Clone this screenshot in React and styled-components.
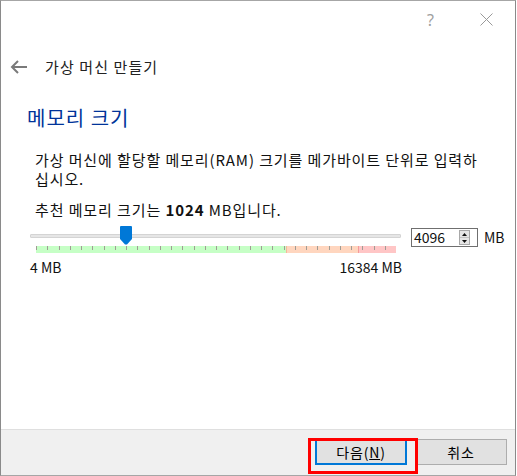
import React from "react";
import styled, { createGlobalStyle } from "styled-components";

const Global = createGlobalStyle`
  html, body { margin: 0; padding: 0; background: #ffffff; }
  body { font-family: "Noto Sans CJK KR", "Noto Sans", sans-serif; color: #000; }
`;

const Window = styled.div`
  position: relative;
  width: 516px;
  height: 476px;
  box-sizing: border-box;
  border: 1px solid #a6a6a6;
  border-left-color: #8a8a8a;
  border-right-color: #8a8a8a;
  background: #ffffff;
  display: flex;
  flex-direction: column;
`;

const TitleBar = styled.div`
  height: 37px;
  display: flex;
  align-items: center;
  justify-content: flex-end;
  padding-right: 22px;
  gap: 46px;
  color: #9a9a9a;
`;

const HelpMark = styled.span`
  font-family: "Noto Sans", sans-serif;
  font-size: 16px;
  line-height: 16px;
  color: #a0a0a0;
`;

const HeaderRow = styled.div`
  margin-top: 19px;
  height: 20px;
  display: flex;
  align-items: center;
  padding-left: 9px;
  gap: 17px;
`;

const HeaderTitle = styled.span`
  font-size: 15px;
  line-height: 20px;
  letter-spacing: 1.1px;
  color: #222;
`;

const Heading = styled.h1`
  margin: 28px 0 0 26px;
  font-size: 20px;
  line-height: 26px;
  letter-spacing: 1px;
  font-weight: 400;
  color: #003399;
`;

const Para = styled.p`
  margin: ${(p) => p.$top}px 0 0 34px;
  width: 470px;
  font-size: 15px;
  line-height: 19px;
  letter-spacing: 0.9px;
  color: #111;
`;

const SliderRow = styled.div`
  margin: 9px 0 0 29px;
  display: flex;
  align-items: flex-start;
`;

const SliderCol = styled.div`
  width: 372px;
  display: flex;
  flex-direction: column;
`;

const TrackArea = styled.div`
  position: relative;
  height: 18px;
`;

const Track = styled.div`
  margin-top: 6px;
  width: 371px;
  height: 4px;
  box-sizing: border-box;
  background: #e6e6e6;
  border: 1px solid #d4d4d4;
  border-radius: 1px;
`;

const Thumb = styled.svg`
  position: absolute;
  top: -2px;
  width: 12px;
  height: 19px;
`;

const TickBar = styled.div`
  position: relative;
  margin-left: 6px;
  width: 360px;
  height: 7px;
  display: flex;
`;

const Segment = styled.div`
  height: 100%;
  background: ${(p) => p.$color};
  border-left: ${(p) => (p.$edge ? `1px solid ${p.$edge}` : "none")};
  box-sizing: border-box;
`;

const Ticks = styled.svg`
  position: absolute;
  left: 0;
  top: 0;
`;

const Labels = styled.div`
  margin-top: 5px;
  display: flex;
  justify-content: space-between;
  font-size: 14px;
  line-height: 18px;
  color: #111;
`;

const SpinBox = styled.div`
  margin-left: 9px;
  width: 67px;
  height: 19px;
  box-sizing: border-box;
  border: 1px solid #6f6f6f;
  display: flex;
  align-items: center;
  padding-left: 2px;
  font-size: 14px;
  color: #111;
`;

const SpinValue = styled.span`
  flex: 1;
  line-height: 17px;
`;

const SpinButtons = styled.div`
  width: 11px;
  height: 15px;
  margin-right: 7px;
  box-sizing: border-box;
  border: 1px solid #a8a8a8;
  background: #e6e6e6;
  display: flex;
  flex-direction: column;
`;

const SpinHalf = styled.div`
  flex: 1;
  display: flex;
  align-items: center;
  justify-content: center;
  border-top: ${(p) => (p.$lower ? "1px solid #c4c4c4" : "none")};
`;

const Unit = styled.span`
  margin-left: 6px;
  font-size: 14px;
  line-height: 19px;
  color: #111;
`;

const Footer = styled.div`
  margin-top: auto;
  height: 46px;
  box-sizing: border-box;
  border-top: 1px solid #dfdfdf;
  background: #f0f0f0;
  display: flex;
  justify-content: flex-end;
  align-items: flex-start;
  padding: 9px 8px 0 0;
  gap: 8px;
`;

const Button = styled.button`
  position: relative;
  width: 92px;
  height: 26px;
  box-sizing: border-box;
  background: #e1e1e1;
  border: ${(p) => (p.$focused ? "2px solid #0078d7" : "1px solid #adadad")};
  font-family: "Noto Sans CJK KR", "Noto Sans", sans-serif;
  font-size: 14px;
  letter-spacing: 0.8px;
  color: #000;
  padding: 0;
  display: flex;
  align-items: center;
  justify-content: center;
`;

const Highlight = styled.div`
  position: absolute;
  left: -9px;
  top: -3px;
  width: 110px;
  height: 36px;
  box-sizing: border-box;
  border: 3px solid #ff0000;
  pointer-events: none;
  z-index: 2;
`;

const MIN = 4;
const MAX = 16384;
const VALUE = 4096;
const BAR = 360;
const segments = [
  { w: 250, color: "#c6ffc6" },
  { w: 72, color: "#ffd6bf", edge: "#f5b79a" },
  { w: 38, color: "#ffc6c6", edge: "#f59a9a" },
];

export default function App() {
  const thumbCenter = 6 + ((VALUE - MIN) / (MAX - MIN)) * BAR;
  const ticks = Array.from({ length: 32 }, (_, i) => Math.round(i * 11.25));
  return (
    <>
      <Global />
      <Window>
        <TitleBar>
          <HelpMark>?</HelpMark>
          <svg width="13" height="13" viewBox="0 0 13 13">
            <path d="M0.5 0.5 L12.5 12.5 M12.5 0.5 L0.5 12.5" stroke="#999" strokeWidth="1" fill="none" />
          </svg>
        </TitleBar>
        <HeaderRow>
          <svg width="18" height="14" viewBox="0 0 18 14">
            <path d="M2 7 H17 M8 1 L2 7 L8 13" stroke="#7a7a7a" strokeWidth="2" fill="none" />
          </svg>
          <HeaderTitle>가상 머신 만들기</HeaderTitle>
        </HeaderRow>
        <Heading>메모리 크기</Heading>
        <Para $top={19}>
          가상 머신에 할당할 메모리(RAM) 크기를 메가바이트 단위로 입력하
          <br />
          십시오.
        </Para>
        <Para $top={12}>
          추천 메모리 크기는 <b>1024</b> MB입니다.
        </Para>
        <SliderRow>
          <SliderCol>
            <TrackArea>
              <Track />
              <Thumb viewBox="0 0 12 19" style={{ left: thumbCenter - 6 }}>
                <path d="M1 0 H11 Q12 0 12 1 V13 L7 18.5 H5 L0 13 V1 Q0 0 1 0 Z" fill="#0078d7" />
              </Thumb>
            </TrackArea>
            <TickBar>
              {segments.map((s, i) => (
                <Segment key={i} $color={s.color} $edge={s.edge} style={{ width: s.w }} />
              ))}
              <Ticks width={BAR} height="7" viewBox={`0 0 ${BAR} 7`}>
                {ticks.map((x) => (
                  <rect key={x} x={x} y="0" width="1" height="4" fill="#a09c94" />
                ))}
              </Ticks>
            </TickBar>
            <Labels>
              <span>4 MB</span>
              <span>16384 MB</span>
            </Labels>
          </SliderCol>
          <SpinBox>
            <SpinValue>4096</SpinValue>
            <SpinButtons>
              <SpinHalf>
                <svg width="5" height="3" viewBox="0 0 5 3">
                  <path d="M2.5 0 L5 3 H0 Z" fill="#111" />
                </svg>
              </SpinHalf>
              <SpinHalf $lower>
                <svg width="5" height="3" viewBox="0 0 5 3">
                  <path d="M0 0 H5 L2.5 3 Z" fill="#111" />
                </svg>
              </SpinHalf>
            </SpinButtons>
          </SpinBox>
          <Unit>MB</Unit>
        </SliderRow>
        <Footer>
          <Button $focused>
            다음(<u>N</u>)
            <Highlight />
          </Button>
          <Button>취소</Button>
        </Footer>
      </Window>
    </>
  );
}
